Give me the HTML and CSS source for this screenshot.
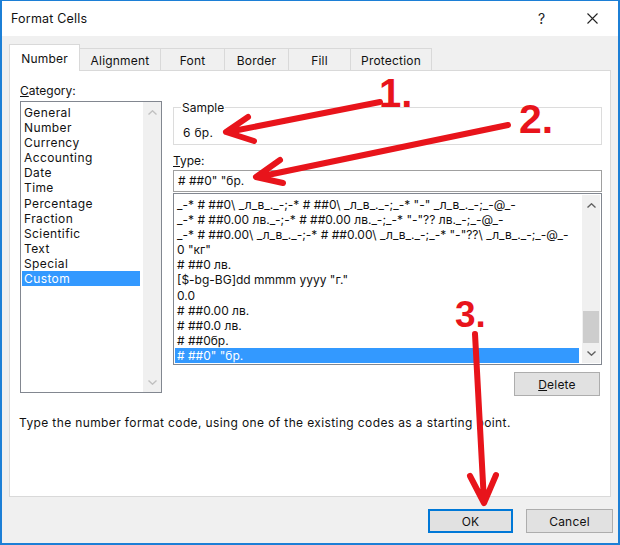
FILE: index.html
```html
<!DOCTYPE html>
<html lang="en">
<head>
  <meta charset="UTF-8" />
  <meta name="viewport" content="width=device-width, initial-scale=1.0"/>
  <title>Format Cells</title>
  <link rel="stylesheet" href="styles.css">
</head>
<body>
  <div class="window">
    <div class="titlebar">
      <span class="title">Format Cells</span>
      <span class="help">?</span>
      <span class="close">
        <svg width="11" height="11" viewBox="0 0 11 11"><path d="M0.5 0.5 L10.5 10.5 M10.5 0.5 L0.5 10.5" stroke="#222" stroke-width="1.1" fill="none"/></svg>
      </span>
    </div>

    <div class="tabs">
      <div class="tab active" style="width:71px">Number</div>
      <div class="tab" style="width:82px">Alignment</div>
      <div class="tab" style="width:65px">Font</div>
      <div class="tab" style="width:65px">Border</div>
      <div class="tab" style="width:63px">Fill</div>
      <div class="tab" style="width:82px">Protection</div>
    </div>

    <div class="panel">
      <div class="columns">
        <div class="left">
          <div class="label"><u>C</u>ategory:</div>
          <div class="listbox categories">
            <div class="items">
              <div class="item">General</div>
              <div class="item">Number</div>
              <div class="item">Currency</div>
              <div class="item">Accounting</div>
              <div class="item">Date</div>
              <div class="item">Time</div>
              <div class="item">Percentage</div>
              <div class="item">Fraction</div>
              <div class="item">Scientific</div>
              <div class="item">Text</div>
              <div class="item">Special</div>
              <div class="item selected">Custom</div>
            </div>
            <div class="scrollbar disabled">
              <div class="arrow"><svg width="9" height="5" viewBox="0 0 9 5"><polyline points="0.5,4.5 4.5,0.8 8.5,4.5" fill="none" stroke-width="1.4"/></svg></div>
              <div class="track"></div>
              <div class="arrow"><svg width="9" height="5" viewBox="0 0 9 5"><polyline points="0.5,0.5 4.5,4.2 8.5,0.5" fill="none" stroke-width="1.4"/></svg></div>
            </div>
          </div>
        </div>

        <div class="right">
          <fieldset class="sample">
            <legend>Sample</legend>
            <div class="sample-value">6 бр.</div>
          </fieldset>

          <div class="label type-label"><u>T</u>ype:</div>
          <div class="type-input"># ##0" "бр.</div>

          <div class="listbox formats">
            <div class="items">
              <div class="item">_-* # ##0\ _л_в_._-;-* # ##0\ _л_в_._-;_-* "-" _л_в_._-;_-@_-</div>
              <div class="item">_-* # ##0.00 лв._-;-* # ##0.00 лв._-;_-* "-"?? лв._-;_-@_-</div>
              <div class="item">_-* # ##0.00\ _л_в_._-;-* # ##0.00\ _л_в_._-;_-* "-"??\ _л_в_._-;_-@_-</div>
              <div class="item">0 "кг"</div>
              <div class="item"># ##0 лв.</div>
              <div class="item">[$-bg-BG]dd mmmm yyyy "г."</div>
              <div class="item">0.0</div>
              <div class="item"># ##0.00 лв.</div>
              <div class="item"># ##0.0 лв.</div>
              <div class="item"># ##0бр.</div>
              <div class="item selected"># ##0" "бр.</div>
            </div>
            <div class="scrollbar">
              <div class="arrow"><svg width="9" height="5" viewBox="0 0 9 5"><polyline points="0.5,4.5 4.5,0.8 8.5,4.5" fill="none" stroke-width="1.4"/></svg></div>
              <div class="track"></div>
              <div class="thumb"></div>
              <div class="arrow"><svg width="9" height="5" viewBox="0 0 9 5"><polyline points="0.5,0.5 4.5,4.2 8.5,0.5" fill="none" stroke-width="1.4"/></svg></div>
            </div>
          </div>

          <div class="delete-row">
            <button class="btn delete"><u>D</u>elete</button>
          </div>
        </div>
      </div>

      <p class="hint">Type the number format code, using one of the existing codes as a starting point.</p>
    </div>

    <div class="footer">
      <button class="btn ok">OK</button>
      <button class="btn cancel">Cancel</button>
    </div>
  </div>

  <!-- red callouts drawn over the dialog -->
  <svg class="annotations" width="620" height="545" viewBox="0 0 620 545">
    <g stroke="#e8141b" stroke-width="6" stroke-linecap="round" stroke-linejoin="round" fill="none">
      <path d="M380 102 L228 132 M248 117 L226 132 L254 141"/>
      <path d="M508 125 L258 177 M280 160 L256 177 L283 183"/>
      <path d="M475 334 L484 502 M470 476 L484 503 L496 475"/>
    </g>
    <g fill="#e8141b" font-family="'Liberation Sans', Arial, sans-serif" font-weight="bold">
      <text x="379" y="107" font-size="40">1.</text>
      <text x="519" y="133" font-size="41">2.</text>
      <text x="455" y="327" font-size="37">3.</text>
    </g>
  </svg>
</body>
</html>
```

FILE: styles.css
```css
* {
  box-sizing: border-box;
}

body {
  margin: 0;
  width: 620px;
  height: 545px;
  position: relative;
  overflow: hidden;
  font-family: Inter, 'Noto Sans', sans-serif;
  font-size: 12px;
  color: #111;
  background: #f0f0f0;
}

.window {
  width: 620px;
  height: 545px;
  border: 2px solid #1c7fd6;
  border-top-width: 1px;
  background: #f0f0f0;
  display: flex;
  flex-direction: column;
}

.titlebar {
  height: 35px;
  background: #fff;
  display: flex;
  align-items: center;
  padding: 0 0 0 9px;
  font-size: 12.5px;
}

.title {
  flex: 1;
  letter-spacing: 0.2px;
}

.help {
  width: 14px;
  margin-right: 35px;
  font-size: 14px;
  color: #222;
}

.close {
  width: 31px;
  display: flex;
  align-items: center;
}

.tabs {
  display: flex;
  align-items: flex-end;
  height: 34px;
  padding-left: 7px;
  position: relative;
  z-index: 1;
}

.tab {
  height: 22px;
  margin-right: -1px;
  border: 1px solid #d9d9d9;
  border-bottom: none;
  background: #f0f0f0;
  display: flex;
  align-items: center;
  justify-content: center;
  padding-top: 1px;
  letter-spacing: 0.2px;
}

.tab.active {
  height: 27px;
  margin-bottom: -1px;
  padding-top: 0;
  background: #fff;
  position: relative;
  z-index: 2;
}

.panel {
  height: 427px;
  margin: 0 7px;
  background: #fff;
  border: 1px solid #d9d9d9;
  padding: 12px 8px 0 10px;
}

.columns {
  display: flex;
  gap: 11px;
}

.left {
  width: 142px;
}

.right {
  width: 429px;
  padding-top: 17px;
}

.label {
  height: 15px;
  line-height: 15px;
  margin-bottom: 3px;
}

.listbox {
  display: flex;
  border: 1px solid #828790;
  background: #fff;
}

.categories {
  height: 292px;
}

.categories .item {
  letter-spacing: 0.4px;
}

.items {
  flex: 1;
  min-width: 0;
  padding: 3px 3px 0 1px;
}

.item {
  height: 15.1px;
  line-height: 15px;
  padding-left: 2px;
  white-space: nowrap;
  overflow: hidden;
}

.item.selected {
  background: #3399ff;
  color: #fff;
}

.scrollbar {
  width: 18px;
  background: #f0f0f0;
  display: flex;
  flex-direction: column;
}

.scrollbar .arrow {
  height: 20px;
  display: flex;
  align-items: center;
  justify-content: center;
}

.scrollbar svg polyline {
  stroke: #606060;
}

.scrollbar.disabled svg polyline {
  stroke: #c0c0c0;
}

.scrollbar .track {
  flex: 1;
}

.scrollbar .thumb {
  height: 32px;
  margin: 0 1px;
  background: #cdcdcd;
}

.sample {
  margin: 0;
  height: 45px;
  padding: 0 7px 0 9px;
  border: 1px solid #dcdcdc;
}

.sample legend {
  padding: 0 1px;
  margin-left: -2px;
  line-height: 15px;
}

.sample-value {
  line-height: 15px;
  margin-top: 10px;
  letter-spacing: 0.3px;
}

.type-label {
  margin-top: 8px;
  margin-bottom: 2px;
}

.type-input {
  height: 22px;
  line-height: 20px;
  border: 1px solid #a0a0a0;
  padding-left: 4px;
}

.formats {
  height: 172px;
  margin-top: 1px;
}

.formats .items {
  padding-top: 3px;
}

.formats .scrollbar {
  margin: 1px 1px 1px 0;
}

.delete-row {
  display: flex;
  justify-content: flex-end;
  padding-right: 2px;
  margin-top: 7px;
}

.btn {
  font-family: inherit;
  font-size: 12px;
  color: #111;
  height: 24px;
  background: #e1e1e1;
  border: 1px solid #adadad;
  padding: 0;
  letter-spacing: 0.2px;
}

.delete {
  width: 86px;
}

.hint {
  margin: 19px 0 0 -1px;
  line-height: 15px;
  letter-spacing: 0.38px;
}

.footer {
  display: flex;
  justify-content: flex-end;
  gap: 13px;
  padding: 12px 5px 0 0;
}

.ok {
  width: 85px;
  border-color: #0078d7;
  box-shadow: inset 0 0 0 1px #0078d7;
}

.cancel {
  width: 87px;
}

.annotations {
  position: absolute;
  top: 0;
  left: 0;
  pointer-events: none;
}
```
